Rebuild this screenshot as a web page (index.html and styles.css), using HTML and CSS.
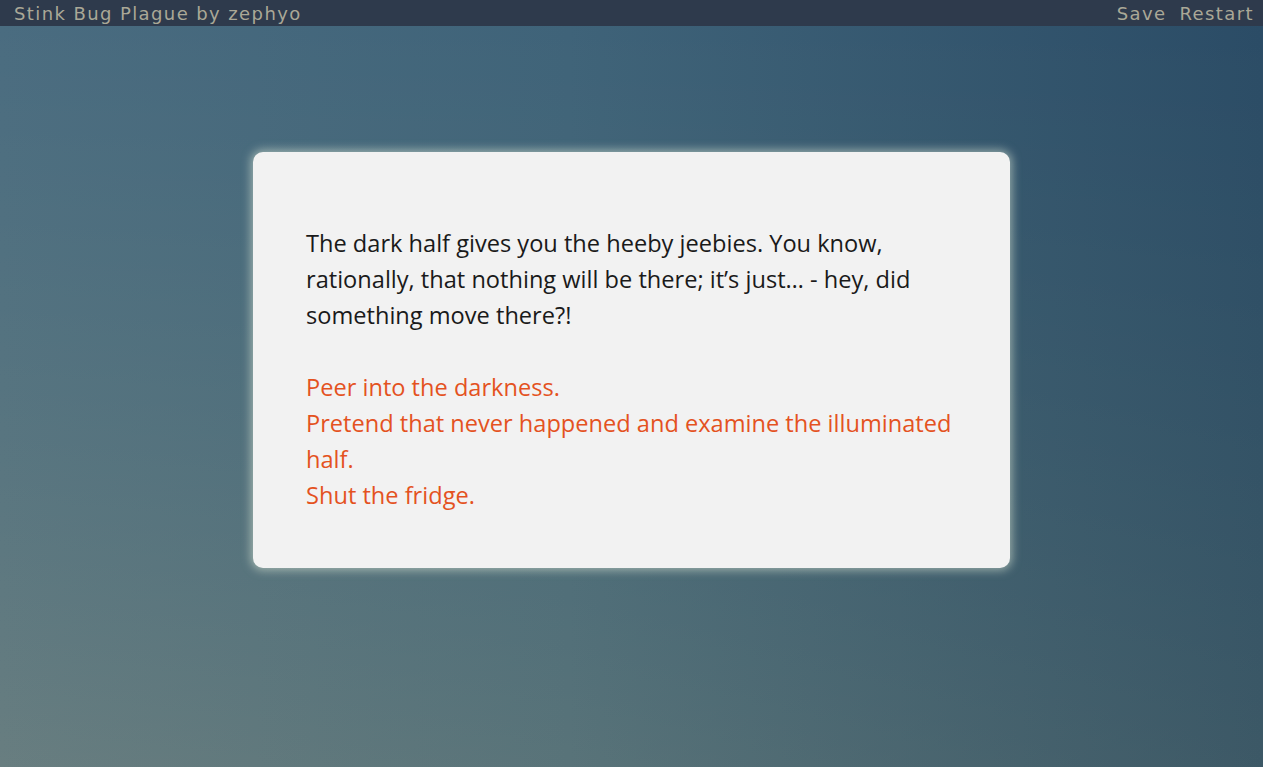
FILE: index.html
```html
<!DOCTYPE html>
<html>
<head>
<meta charset="utf-8">
<link rel="stylesheet" href="styles.css">
</head>
<body>
<header class="topbar">
  <div class="title">Stink Bug Plague by zephyo</div>
  <nav class="menu"><span>Save</span><span>Restart</span></nav>
</header>
<main class="stage">
  <section class="card">
    <p class="passage">The dark half gives you the heeby jeebies. You know, rationally, that nothing will be there; it’s just… - hey, did something move there?!</p>
    <ul class="choices">
      <li>Peer into the darkness.</li>
      <li>Pretend that never happened and examine the illuminated half.</li>
      <li>Shut the fridge.</li>
    </ul>
  </section>
</main>
</body>
</html>
```
FILE: styles.css
```css
html, body {
  margin: 0;
  height: 100%;
}
body {
  background:
    linear-gradient(to bottom, #000000 0%, #000000 3%, rgb(74, 36, 0) 100%),
    linear-gradient(to right, #4a6c80 0%, #3f6379 45%, #2b4c66 100%);
  background-blend-mode: color-dodge, normal;
  font-family: "Open Sans", "Noto Sans", sans-serif;
  overflow: hidden;
  display: flex;
  flex-direction: column;
}
.topbar {
  height: 26px;
  background: #2e3a4c;
  display: flex;
  justify-content: space-between;
  align-items: center;
  padding: 0 9px 0 14px;
  color: #aaa897;
  font-family: "DejaVu Sans", sans-serif;
  font-size: 18px;
  letter-spacing: 1.4px;
  flex: none;
}
.menu {
  display: flex;
  gap: 13px;
}
.stage {
  display: flex;
  justify-content: center;
  padding-top: 126px;
}
.card {
  width: 651px;
  background: #f2f2f2;
  border-radius: 10px;
  box-shadow: 0 0 10px 2px rgba(230, 240, 220, 0.55);
  padding: 73px 53px 55px;
  font-size: 23.6px;
  line-height: 36px;
  color: #1a1a1a;
}
.passage {
  margin: 0 0 36px;
}
.choices {
  list-style: none;
  margin: 0;
  padding: 0;
  color: #e4521f;
}
```
